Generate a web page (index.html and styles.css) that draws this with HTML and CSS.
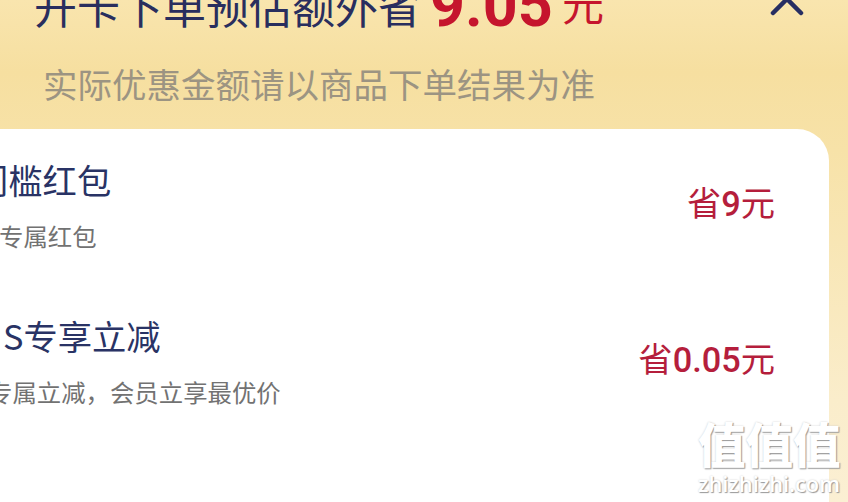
FILE: index.html
```
<!DOCTYPE html>
<html lang="zh-CN">
<head>
<meta charset="utf-8">
<meta name="viewport" content="width=device-width, initial-scale=1">
<title>开卡优惠</title>
<link rel="stylesheet" href="styles.css">
</head>
<body>
<div class="panel">
  <div class="header">
    <div class="title">开卡下单预估额外省</div>
    <div class="total">9.05</div>
    <div class="unit">元</div>
    <svg class="arrow" width="36" height="24" viewBox="0 0 36 24">
      <path d="M4 20 L18 6 L32 20" fill="none" stroke="#272e62" stroke-width="4.5" stroke-linecap="round"/>
    </svg>
  </div>
  <div class="tip">实际优惠金额请以商品下单结果为准</div>
  <div class="card">
    <div class="row">
      <div class="info">
        <div class="name">门槛红包</div>
        <div class="desc">专属红包</div>
      </div>
      <div class="save">省<b>9</b>元</div>
    </div>
    <div class="row row2">
      <div class="info">
        <div class="name">S专享立减</div>
        <div class="desc">专属立减，会员立享最优价</div>
      </div>
      <div class="save">省<b>0.05</b>元</div>
    </div>
  </div>
</div>
<div class="watermark">
  <div class="mark">值值值</div>
  <div class="site">zhizhizhi.com</div>
</div>
</body>
</html>
```
FILE: styles.css
```
body {
  margin: 0;
  overflow: hidden;
  font-family: "Noto Sans CJK SC", sans-serif;
}

.panel {
  height: 502px;
  overflow: hidden;
  background: linear-gradient(#f9e5ae 0px, #f6dfa0 72px, #f7e2a8 150px, #faedcb 400px, #fbefd3 502px);
}

.header {
  display: flex;
  height: 40px;
  padding-left: 34px;
  white-space: nowrap;
}

.title {
  width: 396px;
  margin-top: -27px;
  font-size: 43px;
  line-height: 64px;
  color: #292e5e;
}

.total {
  width: 132px;
  margin-top: -27px;
  font-family: Roboto, sans-serif;
  font-size: 61px;
  font-weight: 700;
  line-height: 64px;
  color: #c5152d;
}

.unit {
  margin-top: -29px;
  font-size: 42px;
  line-height: 64px;
  color: #c5152d;
}

.arrow {
  margin: -7px 43px 0 auto;
}

.tip {
  height: 89px;
  padding-left: 43px;
  font-size: 34.5px;
  line-height: 87px;
  color: #9c9482;
}

.card {
  width: 829px;
  height: 400px;
  background: #fff;
  border-radius: 0 32px 0 0;
}

.row {
  display: flex;
  justify-content: space-between;
  box-sizing: border-box;
  height: 156px;
  padding: 25px 54px 0 0;
  white-space: nowrap;
}

.name {
  margin-left: -26px;
  font-size: 34.3px;
  line-height: 50px;
  color: #293365;
}

.desc {
  margin-top: 14px;
  margin-left: -1px;
  font-size: 24.4px;
  line-height: 36px;
  color: #727272;
}

.row2 .name {
  margin-left: 3px;
}

.row2 .desc {
  margin-left: -12px;
}

.save {
  margin-top: 22px;
  font-size: 34.3px;
  line-height: 50px;
  color: #b51e3c;
}

.save b {
  font-family: Roboto, sans-serif;
  font-weight: 500;
}

.watermark {
  position: absolute;
  left: 698px;
  top: 413px;
  color: #fff;
  text-shadow: 1px 1px 1px #999, 0 0 2px #ccc;
  white-space: nowrap;
}

.mark {
  height: 60px;
  font-size: 47.5px;
  font-weight: 900;
  line-height: 60px;
}

.site {
  height: 24px;
  font-family: "Open Sans", sans-serif;
  font-size: 21.8px;
  font-weight: 600;
  line-height: 22px;
}
```
